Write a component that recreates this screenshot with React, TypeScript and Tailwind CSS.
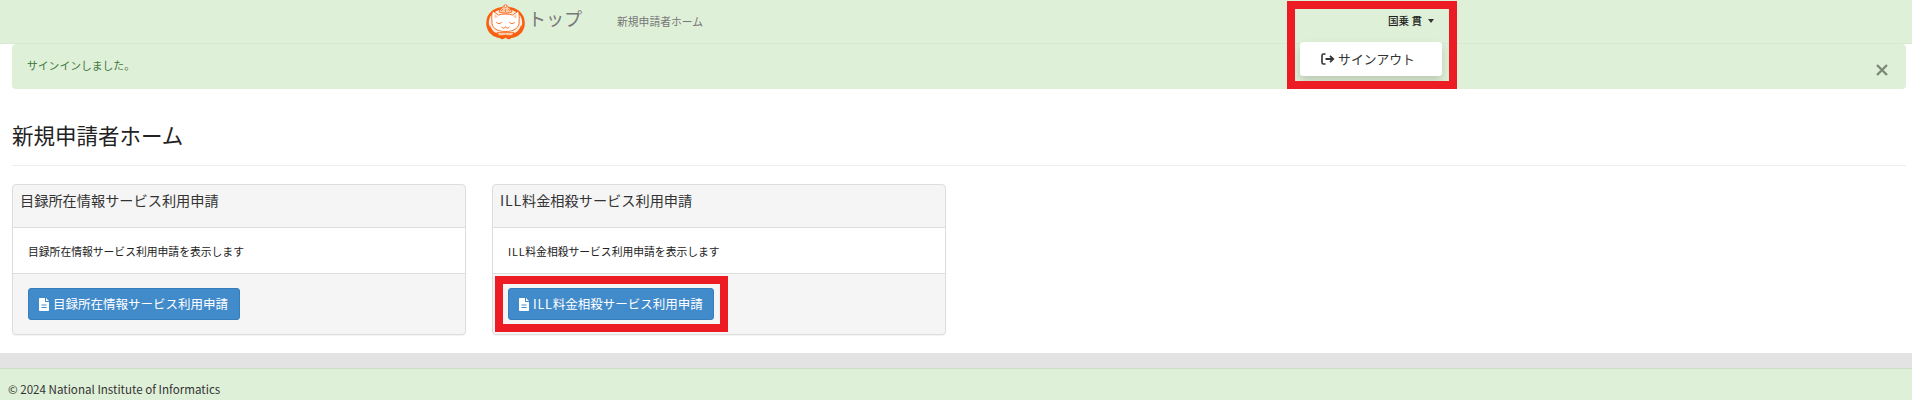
import type { ReactNode } from "react";

const FONT = "font-['Noto_Sans_CJK_JP','Noto_Sans',sans-serif]";

function Logo() {
  return (
    <svg width="39" height="37" viewBox="0 0 39 37" className="block">
      {/* outer ring */}
      <path d="M19.5 5C10 5 1.5 10 1.5 20C1.5 27 6 32 12 33.5C15 34 17.5 34 19.5 32.5C21.5 34 24 34 27 33.5C33 32 37.5 27 37.5 20C37.5 10 29 5 19.5 5Z" fill="#f8f0e6" stroke="#f7600f" strokeWidth="2.6" />
      <path d="M3 24C5 30 10 33.5 15 33.5L12 30.5C8 29.5 5.5 27 4 22ZM36 24C34 30 29 33.5 24 33.5L27 30.5C31 29.5 33.5 27 35 22Z" fill="#f7600f" />
      {/* crown */}
      <path d="M13 9C14 6 16 4.5 17 4C17 1.5 22 1.5 22 4C23 4.5 25 6 26 9C23 10.5 16 10.5 13 9Z" fill="#fbc9a6" stroke="#f7600f" strokeWidth="0.8" />
      <circle cx="19.5" cy="3.2" r="1.3" fill="#fff" stroke="#f7600f" strokeWidth="0.7" />
      <path d="M15 8L17 6M19.5 9V6M24 8L22 6" stroke="#f7600f" strokeWidth="0.7" />
      {/* cat head */}
      <path d="M6.5 8L12.5 12C16 10.7 23 10.7 26.5 12L32.5 8C33.3 12 33.5 15 33 18C34 24.5 28.5 28.5 19.5 28.5C10.5 28.5 5 24.5 6 18C5.5 15 5.7 12 6.5 8Z" fill="#fff" stroke="#f7600f" strokeWidth="0.9" />
      <path d="M8.5 11L12 13.5L8.7 15.5ZM30.5 11L27 13.5L30.3 15.5Z" fill="#fbc9a6" />
      <path d="M10.5 19.5C12 21 14 21 15.5 19.5M23.5 19.5C25 21 27 21 28.5 19.5" fill="none" stroke="#f7600f" strokeWidth="0.9" strokeLinecap="round" />
      <path d="M15.5 24C17 25.8 19 25.3 19.5 23.5C20 25.3 22 25.8 23.5 24" fill="none" stroke="#f7600f" strokeWidth="0.9" strokeLinecap="round" />
      {/* bow */}
      <path d="M11 29.5H28L26 32.5H13Z" fill="#fbc9a6" stroke="#f7600f" strokeWidth="0.7" />
      <path d="M14 35.5C16 33 18 33 19.5 31.5C21 33 23 33 25 35.5C22.5 36.8 21 36 19.5 34.5C18 36 16.5 36.8 14 35.5Z" fill="#f7600f" />
    </svg>
  );
}

function FileIcon({ className }: { className?: string }) {
  return (
    <svg width="10" height="13" viewBox="0 0 10 13" className={className}>
      <path d="M1 0H6V3.5C6 3.8 6.2 4 6.5 4H10V12C10 12.6 9.6 13 9 13H1C.4 13 0 12.6 0 12V1C0 .4.4 0 1 0ZM7 0L10 3H7ZM2.5 6.5V7.5H7.5V6.5ZM2.5 9V10H7.5V9Z" fill="#fff" fillRule="evenodd" />
    </svg>
  );
}

function SignOutIcon() {
  return (
    <svg width="14" height="12" viewBox="0 0 14 12" className="shrink-0">
      <path d="M4.5 1H2.5C1.7 1 1 1.7 1 2.5V9.5C1 10.3 1.7 11 2.5 11H4.5" fill="none" stroke="#333" strokeWidth="1.6" />
      <path d="M4.5 6H12M9 2.8L12.2 6L9 9.2" fill="none" stroke="#333" strokeWidth="1.8" />
    </svg>
  );
}

function Card({ title, body, button, buttonWidth }: { title: ReactNode; body: ReactNode; button: ReactNode; buttonWidth: string }) {
  return (
    <div className="w-[454px] h-[151px] flex flex-col rounded border border-[#ddd] bg-[#f5f5f5] shadow-[0_1px_1px_rgba(0,0,0,0.05)]">
      <div className="h-[43px] px-[7px] pt-[5px] text-[14.2px] leading-[20px] text-[#333] border-b border-[#ddd]">{title}</div>
      <div className="h-[46px] bg-white px-[15px] flex items-center text-[10.8px] leading-[16px] text-[#222] border-b border-[#ddd]"><span>{body}</span></div>
      <div className="flex-1 px-[15px] pt-[14px]">
        <button className={`h-[32px] ${buttonWidth} pl-[10px] flex items-center gap-[4px] rounded-[3px] bg-[#428bca] border border-[#357ebd] text-white text-[12.5px] leading-none whitespace-nowrap`}>
          <FileIcon className="shrink-0" />
          <span>{button}</span>
        </button>
      </div>
    </div>
  );
}

const ILL = <span className="tracking-[0.8px]">ILL</span>;

export default function App() {
  return (
    <div className={`relative h-[400px] overflow-hidden bg-white ${FONT}`}>
      <header className="relative h-[44px] bg-[#dff0d8] border-b border-[#d8e8d2] flex">
        <div className="ml-[486px] mt-[3px]"><Logo /></div>
        <div className="ml-[3px] mt-[4px] text-[18px] leading-[28px] text-[#777]">トップ</div>
        <div className="ml-[35px] mt-[12px] text-[10.8px] leading-[18px] text-[#777]">新規申請者ホーム</div>
        <div className="absolute left-[1388px] top-[12px] flex items-center gap-[6px] text-[10.6px] leading-[18px] text-[#222]">
          <span className="font-medium">国乗 貫</span>
          <span className="w-0 h-0 border-x-[3.5px] border-x-transparent border-t-[4px] border-t-[#333]" />
        </div>
      </header>

      <div className="relative ml-3 mr-[6px] h-[45px] rounded bg-[#dff0d8] px-[15px] pt-[12px] text-[10.8px] leading-[18px] text-[#3c763d]">
        サインインしました。
        <span className="absolute right-[18px] top-[20px]">
          <svg width="12" height="12" viewBox="0 0 12 12" className="block"><path d="M1 1L11 11M11 1L1 11" stroke="#7c8a78" strokeWidth="2.4" /></svg>
        </span>
      </div>

      <div className="pl-3 pr-[6px]">
        <h1 className="mt-[31px] text-[21.5px] leading-[30px] font-normal text-[#222]">新規申請者ホーム</h1>
        <div className="mt-[15px] border-t border-[#eee]" />
        <div className="mt-[18px] flex gap-[26px]">
          <Card title="目録所在情報サービス利用申請" body="目録所在情報サービス利用申請を表示します" button="目録所在情報サービス利用申請" buttonWidth="w-[212px]" />
          <Card title={<>{ILL}料金相殺サービス利用申請</>} body={<>{ILL}料金相殺サービス利用申請を表示します</>} button={<>{ILL}料金相殺サービス利用申請</>} buttonWidth="w-[206px]" />
        </div>
      </div>

      <div className="absolute left-0 right-0 top-[353px] h-[15px] bg-[#e3e3e3]" />
      <footer className="absolute left-0 right-0 top-[368px] h-[32px] bg-[#dff0d8] border-t border-[#cfdcc9] pl-[8px] pt-[11px] text-[11.6px] leading-[18px] text-[#333]">
        © 2024 National Institute of Informatics
      </footer>

      {/* dropdown menu + highlight frames lying over the page */}
      <button className="absolute left-[1300px] top-[42px] w-[142px] h-[34px] rounded-[3px] bg-white shadow-[0_5px_10px_rgba(0,0,0,0.16)] flex items-center justify-center gap-[3px] pr-[6px] text-[12.8px] text-[#333]">
        <SignOutIcon />
        サインアウト
      </button>
      <div className="absolute left-[1287px] top-[1px] w-[170px] h-[88px] border-[8px] border-[#ed1c24]" />
      <div className="absolute left-[495px] top-[276px] w-[233px] h-[56px] border-[8px] border-[#ed1c24]" />
    </div>
  );
}
